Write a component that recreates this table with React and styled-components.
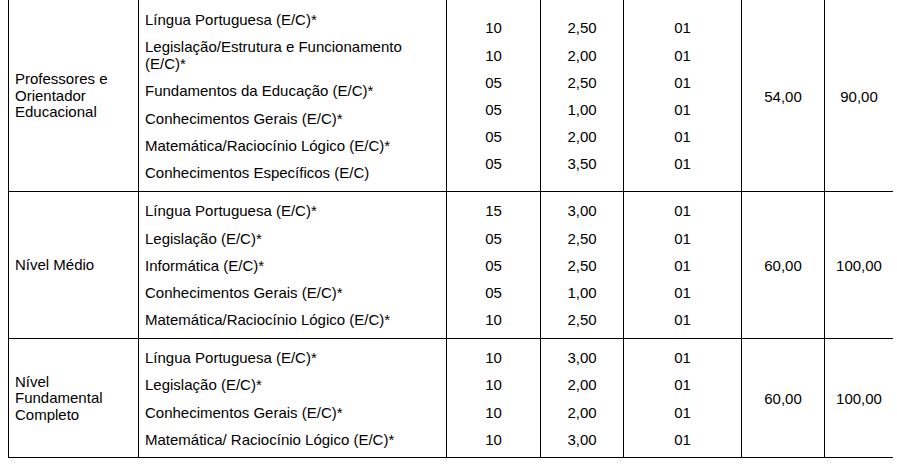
import React from 'react';
import styled, { createGlobalStyle } from 'styled-components';

const GlobalStyle = createGlobalStyle`
  html, body {
    margin: 0;
    padding: 0;
    background: #ffffff;
  }
  body {
    font-family: "Liberation Sans", Arial, sans-serif;
    color: #000000;
  }
`;

const Wrapper = styled.div`
  margin-left: 8px;
  width: 885px;
  display: flex;
  flex-direction: column;
`;

const Section = styled.div`
  display: grid;
  grid-template-columns: 130px 308px 94px 83px 118px 83px 69px;
  height: ${({ $h }) => $h}px;
  border-bottom: 1px solid #000;
  box-sizing: border-box;
`;

const Cell = styled.div`
  border-left: 1px solid #000;
  box-sizing: border-box;
  display: flex;
  flex-direction: column;
  justify-content: center;
  font-size: 15px;
`;

const LabelCell = styled(Cell)`
  padding: 1px 8px 0 6px;
  line-height: 16.5px;
`;

const SubjectCell = styled(Cell)`
  padding: 1px 6px 0 6px;
  line-height: 17.2px;
  gap: 10px;
`;

const Subject = styled.div`
  white-space: nowrap;
`;

const NumberCell = styled(Cell)`
  align-items: center;
  padding-top: 1px;
  line-height: 27.2px;
`;

const TotalCell = styled(Cell)`
  align-items: center;
  padding-top: 1px;
`;

const sections = [
  {
    h: 192,
    label: 'Professores e Orientador Educacional',
    subjects: [
      ['Língua Portuguesa (E/C)*'],
      ['Legislação/Estrutura e Funcionamento', '(E/C)*'],
      ['Fundamentos da Educação (E/C)*'],
      ['Conhecimentos Gerais (E/C)*'],
      ['Matemática/Raciocínio Lógico (E/C)*'],
      ['Conhecimentos Específicos (E/C)'],
    ],
    questions: ['10', '10', '05', '05', '05', '05'],
    weights: ['2,50', '2,00', '2,50', '1,00', '2,00', '3,50'],
    min: ['01', '01', '01', '01', '01', '01'],
    pass: '54,00',
    total: '90,00',
  },
  {
    h: 147,
    label: 'Nível Médio',
    subjects: [
      ['Língua Portuguesa (E/C)*'],
      ['Legislação (E/C)*'],
      ['Informática (E/C)*'],
      ['Conhecimentos Gerais (E/C)*'],
      ['Matemática/Raciocínio Lógico (E/C)*'],
    ],
    questions: ['15', '05', '05', '05', '10'],
    weights: ['3,00', '2,50', '2,50', '1,00', '2,50'],
    min: ['01', '01', '01', '01', '01'],
    pass: '60,00',
    total: '100,00',
  },
  {
    h: 119,
    label: 'Nível Fundamental Completo',
    subjects: [
      ['Língua Portuguesa (E/C)*'],
      ['Legislação (E/C)*'],
      ['Conhecimentos Gerais (E/C)*'],
      ['Matemática/ Raciocínio Lógico (E/C)*'],
    ],
    questions: ['10', '10', '10', '10'],
    weights: ['3,00', '2,00', '2,00', '3,00'],
    min: ['01', '01', '01', '01'],
    pass: '60,00',
    total: '100,00',
  },
];

export default function App() {
  return (
    <>
      <GlobalStyle />
      <Wrapper>
        {sections.map((s, i) => (
          <Section key={i} $h={s.h}>
            <LabelCell>{s.label}</LabelCell>
            <SubjectCell>
              {s.subjects.map((lines, j) => (
                <Subject key={j}>
                  {lines.map((l, k) => (
                    <React.Fragment key={k}>
                      {k > 0 && <br />}
                      {l}
                    </React.Fragment>
                  ))}
                </Subject>
              ))}
            </SubjectCell>
            <NumberCell>
              {s.questions.map((v, j) => <div key={j}>{v}</div>)}
            </NumberCell>
            <NumberCell>
              {s.weights.map((v, j) => <div key={j}>{v}</div>)}
            </NumberCell>
            <NumberCell>
              {s.min.map((v, j) => <div key={j}>{v}</div>)}
            </NumberCell>
            <TotalCell>{s.pass}</TotalCell>
            <TotalCell>{s.total}</TotalCell>
          </Section>
        ))}
      </Wrapper>
    </>
  );
}
